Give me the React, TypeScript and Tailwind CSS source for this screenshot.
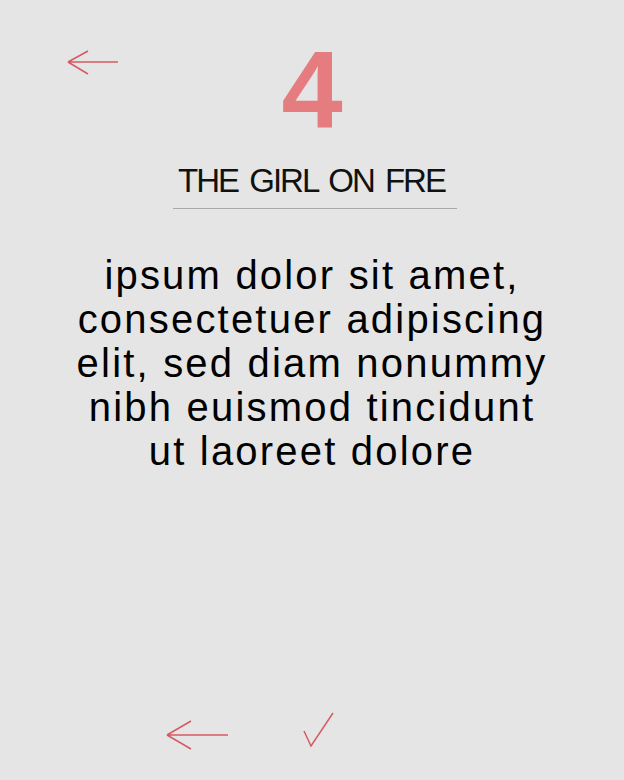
import React from "react";

const ArrowLeft = ({ className }: { className?: string }) => (
  <svg viewBox="0 0 52 26" className={className} fill="none" stroke="currentColor" strokeWidth={1.5}>
    <path d="M1 12 H51 M1 12 L21 1 M1 12 L21 24" />
  </svg>
);

export default function App() {
  return (
    <div
      className="flex h-[780px] w-full flex-col items-center bg-[#e5e5e5] text-black"
      style={{ fontFamily: '"Liberation Sans", Arial, sans-serif' }}
    >
      {/* Header */}
      <div className="relative flex w-full justify-center pt-[29px]">
        <button className="absolute left-[67px] top-[50px] text-[#d65a63]">
          <ArrowLeft className="h-[26px] w-[52px]" />
        </button>
        <div className="text-[110px] font-bold leading-[120px] text-[#e57c7f]">4</div>
      </div>

      <div className="mt-[14px] ml-[6px] w-[284px] border-b border-[#a9a9a9] pr-[7px] pb-[9px] text-center text-[33px] leading-[36px] tracking-[-2px] text-[#111] [word-spacing:4px]">
        THE GIRL ON FRE
      </div>

      <p className="mt-[44px] text-center text-[40px] leading-[44px] tracking-[2.2px]">
        ipsum dolor sit amet,
        <br />
        consectetuer adipiscing
        <br />
        elit, sed diam nonummy
        <br />
        nibh euismod tincidunt
        <br />
        ut laoreet dolore
      </p>

      {/* Bottom bar */}
      <div className="mt-auto mb-[29px] ml-[165px] flex items-start gap-[73px] self-start">
        <button className="mt-[7px] text-[#d65a63]">
          <svg viewBox="0 0 64 32" className="block h-[32px] w-[64px]" fill="none" stroke="currentColor" strokeWidth={1.5}>
            <path d="M2 16 H63 M2 16 L26 2 M2 16 L26 30" />
          </svg>
        </button>
        <button className="text-[#d65a63]">
          <svg viewBox="0 0 32 36" className="block h-[36px] w-[32px]" fill="none" stroke="currentColor" strokeWidth={1.5}>
            <path d="M2 19 L9 34 L31 1" />
          </svg>
        </button>
      </div>
    </div>
  );
}
